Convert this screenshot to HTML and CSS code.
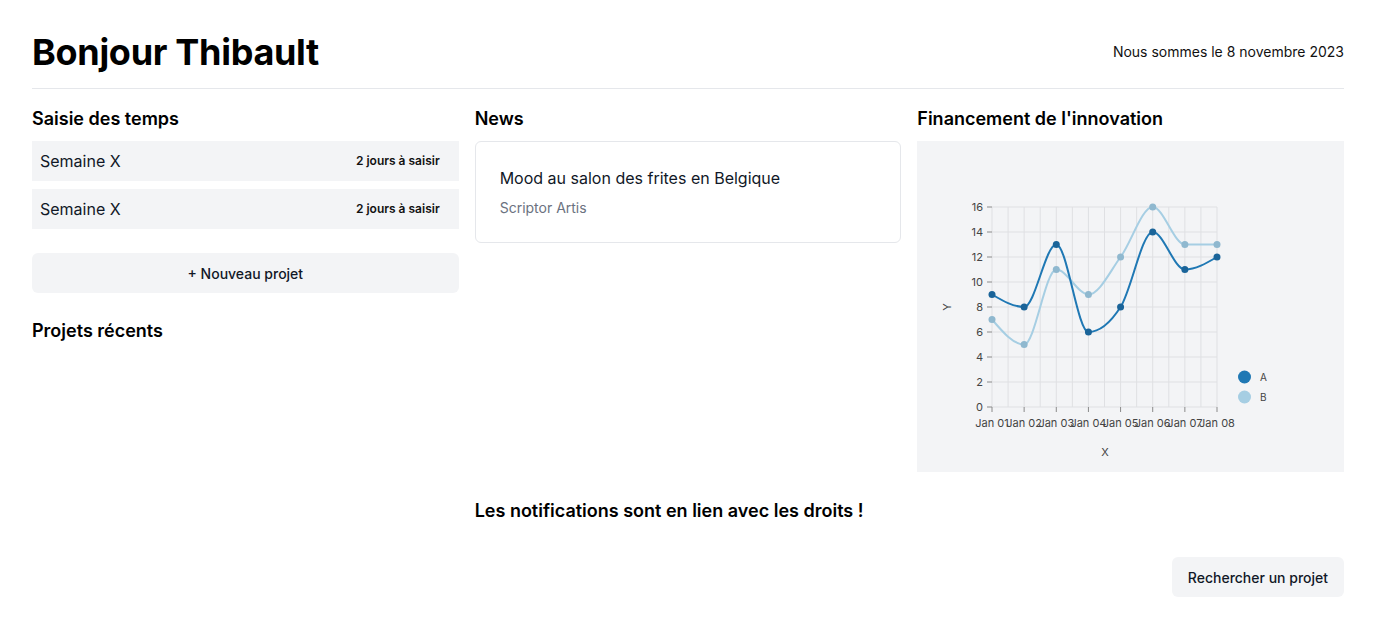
FILE: index.html
```html
<!DOCTYPE html>
<html lang="fr">
<head>
<meta charset="utf-8">
<title>Accueil</title>
<link rel="stylesheet" href="styles.css">
</head>
<body>
<div class="page">
  <header class="top">
    <h1 class="title">Bonjour Thibault</h1>
    <p class="date">Nous sommes le 8 novembre 2023</p>
  </header>
  <main class="grid">
    <section class="col">
      <h2 class="sec-title">Saisie des temps</h2>
      <div class="weeks">
        <div class="week"><span class="week-name">Semaine X</span><span class="week-badge">2 jours à saisir</span></div>
        <div class="week"><span class="week-name">Semaine X</span><span class="week-badge">2 jours à saisir</span></div>
      </div>
      <button class="btn btn-full">+ Nouveau projet</button>
      <h2 class="sec-title recent">Projets récents</h2>
    </section>
    <section class="col">
      <h2 class="sec-title">News</h2>
      <article class="news">
        <div class="news-title">Mood au salon des frites en Belgique</div>
        <div class="news-author">Scriptor Artis</div>
      </article>
    </section>
    <section class="col">
      <h2 class="sec-title">Financement de l'innovation</h2>
      <div class="chart">
        <svg class="chart-svg" viewBox="0 0 427 331" width="427" height="331">
          <g class="grid-lines" stroke="#dfe0e3" stroke-width="1">
            <line x1="75" y1="66" x2="75" y2="266"/>
            <line x1="91.07" y1="66" x2="91.07" y2="266"/>
            <line x1="107.14" y1="66" x2="107.14" y2="266"/>
            <line x1="123.21" y1="66" x2="123.21" y2="266"/>
            <line x1="139.29" y1="66" x2="139.29" y2="266"/>
            <line x1="155.36" y1="66" x2="155.36" y2="266"/>
            <line x1="171.43" y1="66" x2="171.43" y2="266"/>
            <line x1="187.5" y1="66" x2="187.5" y2="266"/>
            <line x1="203.57" y1="66" x2="203.57" y2="266"/>
            <line x1="219.64" y1="66" x2="219.64" y2="266"/>
            <line x1="235.71" y1="66" x2="235.71" y2="266"/>
            <line x1="251.79" y1="66" x2="251.79" y2="266"/>
            <line x1="267.86" y1="66" x2="267.86" y2="266"/>
            <line x1="283.93" y1="66" x2="283.93" y2="266"/>
            <line x1="300" y1="66" x2="300" y2="266"/>
            <line x1="75" y1="66" x2="300" y2="66"/>
            <line x1="75" y1="91" x2="300" y2="91"/>
            <line x1="75" y1="116" x2="300" y2="116"/>
            <line x1="75" y1="141" x2="300" y2="141"/>
            <line x1="75" y1="166" x2="300" y2="166"/>
            <line x1="75" y1="191" x2="300" y2="191"/>
            <line x1="75" y1="216" x2="300" y2="216"/>
            <line x1="75" y1="241" x2="300" y2="241"/>
            <line x1="75" y1="266" x2="300" y2="266"/>
          </g>
          <g stroke="#8a8a8a" stroke-width="1">
            <line x1="70" y1="66" x2="75" y2="66"/>
            <line x1="70" y1="91" x2="75" y2="91"/>
            <line x1="70" y1="116" x2="75" y2="116"/>
            <line x1="70" y1="141" x2="75" y2="141"/>
            <line x1="70" y1="166" x2="75" y2="166"/>
            <line x1="70" y1="191" x2="75" y2="191"/>
            <line x1="70" y1="216" x2="75" y2="216"/>
            <line x1="70" y1="241" x2="75" y2="241"/>
            <line x1="70" y1="266" x2="75" y2="266"/>
            <line x1="75" y1="266" x2="75" y2="271"/>
            <line x1="107.14" y1="266" x2="107.14" y2="271"/>
            <line x1="139.29" y1="266" x2="139.29" y2="271"/>
            <line x1="171.43" y1="266" x2="171.43" y2="271"/>
            <line x1="203.57" y1="266" x2="203.57" y2="271"/>
            <line x1="235.71" y1="266" x2="235.71" y2="271"/>
            <line x1="267.86" y1="266" x2="267.86" y2="271"/>
            <line x1="300" y1="266" x2="300" y2="271"/>
          </g>
          <g class="tick-text" text-anchor="end">
            <text x="66" y="70">16</text>
            <text x="66" y="95">14</text>
            <text x="66" y="120">12</text>
            <text x="66" y="145">10</text>
            <text x="66" y="170">8</text>
            <text x="66" y="195">6</text>
            <text x="66" y="220">4</text>
            <text x="66" y="245">2</text>
            <text x="66" y="270">0</text>
          </g>
          <g class="tick-text" text-anchor="middle">
            <text x="75" y="286">Jan 01</text>
            <text x="107.14" y="286">Jan 02</text>
            <text x="139.29" y="286">Jan 03</text>
            <text x="171.43" y="286">Jan 04</text>
            <text x="203.57" y="286">Jan 05</text>
            <text x="235.71" y="286">Jan 06</text>
            <text x="267.86" y="286">Jan 07</text>
            <text x="300" y="286">Jan 08</text>
          </g>
          <text class="axis-title" x="188" y="315" text-anchor="middle">X</text>
          <text class="axis-title" x="0" y="0" text-anchor="middle" transform="translate(34 166) rotate(-90)">Y</text>
          <path fill="none" stroke="#a6cee3" stroke-width="2" d="M75,178.5C85.71,191,96.43,203.5,107.14,203.5C117.86,203.5,128.57,128.5,139.29,128.5C150,128.5,160.71,153.5,171.43,153.5C182.14,153.5,192.86,130.58,203.57,116C214.29,101.42,225,66,235.71,66C246.43,66,257.14,103.5,267.86,103.5C278.57,103.5,289.29,103.5,300,103.5"/>
          <g fill="#8fb8cf">
            <circle cx="75" cy="178.5" r="3.5"/>
            <circle cx="107.14" cy="203.5" r="3.5"/>
            <circle cx="139.29" cy="128.5" r="3.5"/>
            <circle cx="171.43" cy="153.5" r="3.5"/>
            <circle cx="203.57" cy="116" r="3.5"/>
            <circle cx="235.71" cy="66" r="3.5"/>
            <circle cx="267.86" cy="103.5" r="3.5"/>
            <circle cx="300" cy="103.5" r="3.5"/>
          </g>
          <path fill="none" stroke="#1f78b4" stroke-width="2" d="M75,153.5C85.71,159.75,96.43,166,107.14,166C117.86,166,128.57,103.5,139.29,103.5C150,103.5,160.71,191,171.43,191C182.14,191,192.86,182.67,203.57,166C214.29,149.33,225,91,235.71,91C246.43,91,257.14,128.5,267.86,128.5C278.57,128.5,289.29,122.25,300,116"/>
          <g fill="#1a6499">
            <circle cx="75" cy="153.5" r="3.5"/>
            <circle cx="107.14" cy="166" r="3.5"/>
            <circle cx="139.29" cy="103.5" r="3.5"/>
            <circle cx="171.43" cy="191" r="3.5"/>
            <circle cx="203.57" cy="166" r="3.5"/>
            <circle cx="235.71" cy="91" r="3.5"/>
            <circle cx="267.86" cy="128.5" r="3.5"/>
            <circle cx="300" cy="116" r="3.5"/>
          </g>
          <circle cx="327.5" cy="236" r="6.5" fill="#1f78b4"/>
          <circle cx="327.5" cy="256" r="6.5" fill="#a6cee3"/>
          <text class="legend-text" x="343" y="240">A</text>
          <text class="legend-text" x="343" y="260">B</text>
        </svg>
      </div>
    </section>
    <section class="col col-notif">
      <h2 class="sec-title">Les notifications sont en lien avec les droits !</h2>
    </section>
  </main>
  <div class="actions">
    <button class="btn">Rechercher un projet</button>
  </div>
</div>
</body>
</html>
```

FILE: styles.css
```css
* { box-sizing: border-box; }
html, body { margin: 0; padding: 0; background: #fff; }
body {
  font-family: Inter, "Noto Sans", "Liberation Sans", sans-serif;
  color: #111827;
}
.page { padding: 32px; }
.top {
  display: flex;
  justify-content: space-between;
  align-items: center;
  padding-bottom: 16px;
  border-bottom: 1px solid #e5e7eb;
}
.title {
  margin: 0;
  font-size: 36px;
  line-height: 40px;
  font-weight: 700;
  letter-spacing: -0.3px;
  color: #000;
}
.date {
  margin: 0;
  font-size: 14px;
  line-height: 20px;
  color: #111;
}
.grid {
  display: grid;
  grid-template-columns: repeat(3, 1fr);
  column-gap: 16px;
  row-gap: 25px;
  padding-top: 16px;
}
.col { min-width: 0; }
.col-notif { grid-column: 2 / span 2; }
.sec-title {
  margin: 0 0 8px 0;
  font-size: 18px;
  line-height: 28px;
  font-weight: 600;
  color: #000;
}
.weeks { display: flex; flex-direction: column; gap: 8px; }
.week {
  display: flex;
  justify-content: space-between;
  align-items: center;
  height: 40px;
  padding: 0 19px 0 8px;
  background: #f3f4f6;
}
.week-name { font-size: 16px; line-height: 24px; color: #111827; }
.week-badge { font-size: 12px; line-height: 16px; font-weight: 600; color: #111; }
.btn {
  display: inline-flex;
  align-items: center;
  justify-content: center;
  height: 40px;
  padding: 0 16px;
  border: 0;
  border-radius: 6px;
  background: #f3f4f6;
  font-family: inherit;
  font-size: 14px;
  font-weight: 500;
  color: #111827;
}
.btn-full { width: 100%; margin-top: 24px; }
.recent { margin-top: 24px; }
.news {
  border: 1px solid #e5e7eb;
  border-radius: 6px;
  padding: 24px;
}
.news-title { font-size: 16px; line-height: 24px; color: #111827; }
.news-author { margin-top: 8px; font-size: 14px; line-height: 20px; color: #6b7280; }
.chart {
  height: 331px;
  background: #f3f4f6;
}
.chart-svg { display: block; }
.tick-text text { font-size: 11px; fill: #444; font-family: Inter, "Liberation Sans", sans-serif; }
.axis-title { font-size: 11px; fill: #444; }
.legend-text { font-size: 10px; fill: #444; }
.actions {
  display: flex;
  justify-content: flex-end;
  margin-top: 24px;
}
```
